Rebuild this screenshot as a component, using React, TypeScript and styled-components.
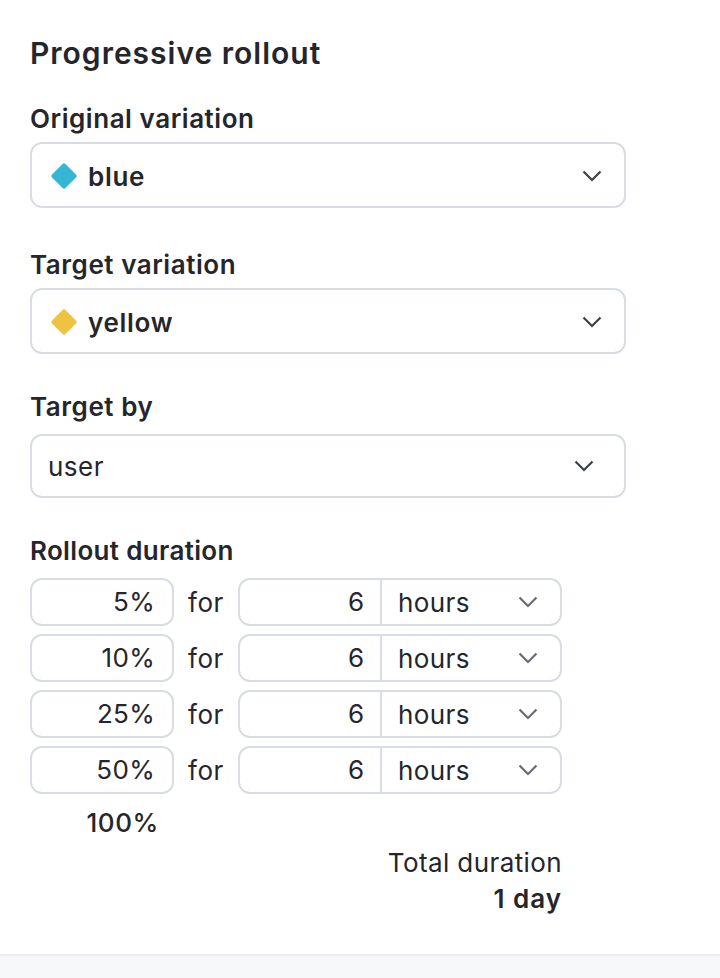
import React from "react";
import styled, { createGlobalStyle } from "styled-components";

const GlobalStyle = createGlobalStyle`
  html, body {
    margin: 0;
    padding: 0;
    background: #fff;
    font-family: "Inter", "Liberation Sans", sans-serif;
    color: #25252c;
  }
`;

const Page = styled.div`
  height: 978px;
  display: flex;
  flex-direction: column;
  box-sizing: border-box;
  overflow: hidden;
`;

const Panel = styled.section`
  height: 954px;
  box-sizing: border-box;
  padding: 36px 94px 0 30px;
`;

const Footer = styled.div`
  flex: 1;
  background: #f7f8fa;
  border-top: 2px solid #ebedf2;
`;

const Title = styled.h2`
  margin: 0 0 33px;
  font-size: 30px;
  line-height: 34px;
  font-weight: 600;
  letter-spacing: 1px;
`;

const Label = styled.div<{ $space: number; $tracking?: number }>`
  font-size: 26px;
  line-height: 32px;
  font-weight: 600;
  letter-spacing: ${(p) => p.$tracking ?? 0.55}px;
  margin-bottom: ${(p) => p.$space}px;
`;

const Field = styled.div<{ $gap: number }>`
  margin-bottom: ${(p) => p.$gap}px;
`;

const Select = styled.div<{ $height: number; $chevronPad: number; $padLeft: number; $padTop: number }>`
  height: ${(p) => p.$height}px;
  box-sizing: border-box;
  display: flex;
  align-items: center;
  gap: 10px;
  padding: ${(p) => p.$padTop}px ${(p) => p.$chevronPad}px 0 ${(p) => p.$padLeft}px;
  border: 2px solid #d8dce3;
  border-radius: 12px;
  background: #fff;
`;

const Value = styled.span<{ $bold?: boolean }>`
  flex: 1;
  font-size: 26px;
  letter-spacing: ${(p) => (p.$bold ? 0.7 : 0.5)}px;
  font-weight: ${(p) => (p.$bold ? 600 : 400)};
`;

const Rows = styled.div`
  display: flex;
  flex-direction: column;
  gap: 8px;
  width: 532px;
`;

const Row = styled.div`
  display: flex;
  align-items: center;
  height: 48px;
`;

const Percent = styled.div`
  width: 144px;
  height: 48px;
  box-sizing: border-box;
  border: 2px solid #d8dce3;
  border-radius: 12px;
  padding-right: 17px;
  text-align: right;
  font-size: 26px;
  letter-spacing: 0.3px;
  line-height: 44px;
`;

const For = styled.span`
  width: 64px;
  text-align: center;
  font-size: 26px;
  letter-spacing: 0.6px;
`;

const Duration = styled.div`
  width: 324px;
  height: 48px;
  box-sizing: border-box;
  display: flex;
  border: 2px solid #d8dce3;
  border-radius: 12px;
`;

const Amount = styled.div`
  width: 142px;
  box-sizing: border-box;
  padding-right: 16px;
  text-align: right;
  font-size: 26px;
  line-height: 44px;
  border-right: 2px solid #d8dce3;
`;

const Unit = styled.div`
  flex: 1;
  display: flex;
  align-items: center;
  justify-content: space-between;
  padding: 0 22px 0 16px;
  font-size: 26px;
  letter-spacing: 0.4px;
`;

const Final = styled.div`
  width: 144px;
  margin-top: 8px;
  padding-right: 15px;
  box-sizing: border-box;
  text-align: right;
  font-size: 26px;
  letter-spacing: 0.6px;
  line-height: 42px;
  font-weight: 500;
`;

const Total = styled.div`
  width: 532px;
  margin-top: 1px;
  text-align: right;
  font-size: 26px;
  letter-spacing: 0.4px;
  line-height: 36px;
`;

const TotalValue = styled.div`
  font-weight: 600;
  letter-spacing: 1px;
`;

const Diamond: React.FC<{ color: string }> = ({ color }) => (
  <svg width="28" height="28" viewBox="0 0 28 28">
    <rect x="4.5" y="4.5" width="19" height="19" rx="2" fill={color} transform="rotate(45 14 14)" />
  </svg>
);

const Chevron: React.FC<{ color: string }> = ({ color }) => (
  <svg width="20" height="12" viewBox="0 0 20 12" fill="none">
    <path d="M1.5 1.5 L10 10 L18.5 1.5" stroke={color} strokeWidth="2.2" />
  </svg>
);

const steps = ["5%", "10%", "25%", "50%"];

export default function App() {
  return (
    <Page>
      <GlobalStyle />
      <Panel>
        <Title>Progressive rollout</Title>
        <Field $gap={41}>
          <Label $space={7}>Original variation</Label>
          <Select $height={66} $chevronPad={22} $padLeft={18} $padTop={2}>
            <Diamond color="#35b6d2" />
            <Value $bold>blue</Value>
            <Chevron color="#3c4049" />
          </Select>
        </Field>
        <Field $gap={37}>
          <Label $space={7}>Target variation</Label>
          <Select $height={66} $chevronPad={22} $padLeft={18} $padTop={2}>
            <Diamond color="#efc242" />
            <Value $bold>yellow</Value>
            <Chevron color="#3c4049" />
          </Select>
        </Field>
        <Field $gap={37}>
          <Label $space={11}>Target by</Label>
          <Select $height={64} $chevronPad={30} $padLeft={16} $padTop={0}>
            <Value>user</Value>
            <Chevron color="#3c4049" />
          </Select>
        </Field>
        <Label $space={11} $tracking={0.33}>Rollout duration</Label>
        <Rows>
          {steps.map((s) => (
            <Row key={s}>
              <Percent>{s}</Percent>
              <For>for</For>
              <Duration>
                <Amount>6</Amount>
                <Unit>
                  hours
                  <Chevron color="#686c75" />
                </Unit>
              </Duration>
            </Row>
          ))}
        </Rows>
        <Final>100%</Final>
        <Total>
          Total duration
          <TotalValue>1 day</TotalValue>
        </Total>
      </Panel>
      <Footer />
    </Page>
  );
}
